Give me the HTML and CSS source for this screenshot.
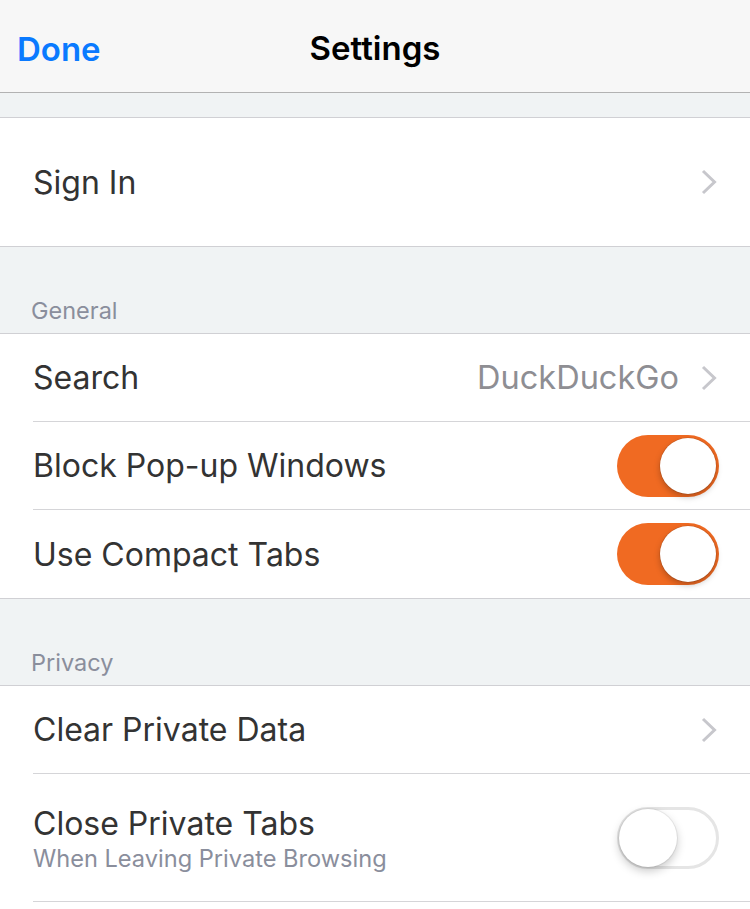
FILE: index.html
```html
<!DOCTYPE html>
<html>
<head>
<meta charset="utf-8">
<link rel="stylesheet" href="styles.css">
</head>
<body>
<div class="screen">
  <header class="navbar">
    <span class="nav-done">Done</span>
    <span class="nav-title">Settings</span>
  </header>
  <div class="gap gap-top"></div>
  <section class="group">
    <div class="row row-tall">
      <span class="label">Sign In</span>
      <span class="accessory"><svg class="chev" viewBox="0 0 16 26" width="16" height="26"><path d="M2 2 L13.5 13 L2 24" fill="none" stroke="#c7c7cc" stroke-width="3"/></svg></span>
    </div>
  </section>
  <div class="gap gap-header"><span class="section-title">General</span></div>
  <section class="group">
    <div class="row">
      <span class="label">Search</span>
      <span class="accessory"><span class="value">DuckDuckGo</span><svg class="chev" viewBox="0 0 16 26" width="16" height="26"><path d="M2 2 L13.5 13 L2 24" fill="none" stroke="#c7c7cc" stroke-width="3"/></svg></span>
    </div>
    <div class="row">
      <span class="label">Block Pop-up Windows</span>
      <span class="toggle on"><span class="knob"></span></span>
    </div>
    <div class="row">
      <span class="label">Use Compact Tabs</span>
      <span class="toggle on"><span class="knob"></span></span>
    </div>
  </section>
  <div class="gap gap-header"><span class="section-title">Privacy</span></div>
  <section class="group group-fill">
    <div class="row">
      <span class="label">Clear Private Data</span>
      <span class="accessory"><svg class="chev" viewBox="0 0 16 26" width="16" height="26"><path d="M2 2 L13.5 13 L2 24" fill="none" stroke="#c7c7cc" stroke-width="3"/></svg></span>
    </div>
    <div class="row row-sub">
      <span class="label-wrap">
        <span class="label">Close Private Tabs</span>
        <span class="sublabel">When Leaving Private Browsing</span>
      </span>
      <span class="toggle off"><span class="knob"></span></span>
    </div>
  </section>
</div>
</body>
</html>
```

FILE: styles.css
```css
html, body {
  margin: 0;
  padding: 0;
  background: #f0f3f4;
}
.screen {
  width: 750px;
  height: 909px;
  overflow: hidden;
  background: #f0f3f4;
  font-family: Inter, "Liberation Sans", sans-serif;
  display: flex;
  flex-direction: column;
}
.navbar {
  flex: none;
  height: 92px;
  background: #f7f7f7;
  border-bottom: 1px solid #b2b2b2;
  position: relative;
  display: flex;
  align-items: center;
  justify-content: center;
}
.nav-done {
  position: absolute;
  left: 17px;
  top: 29px;
  font-size: 33px;
  font-weight: 600;
  color: #0a7aff;
}
.nav-title {
  font-size: 33px;
  font-weight: 600;
  color: #000;
  margin-top: 3px;
}
.gap {
  flex: none;
  border-bottom: 1px solid #d0d0d4;
  box-sizing: border-box;
}
.gap-top {
  height: 25px;
}
.gap-header {
  height: 87px;
  display: flex;
  align-items: flex-end;
  padding: 0 0 8px 31px;
}
.section-title {
  font-size: 23.5px;
  color: #8a8e9c;
}
.group {
  flex: none;
  background: #fff;
  border-bottom: 1px solid #d0d0d4;
  padding-left: 33px;
}
.group-fill {
  flex: 1 0 auto;
  border-bottom: none;
}
.row {
  height: 88px;
  box-sizing: border-box;
  display: flex;
  align-items: center;
  justify-content: space-between;
  padding-right: 32px;
  border-bottom: 1px solid #d5d5d8;
}
.row:last-child {
  border-bottom: none;
}
.row-tall {
  height: 128px;
}
.group-fill .row:last-child {
  border-bottom: 1px solid #d5d5d8;
}
.row-sub {
  height: 128px;
}
.label {
  font-size: 32px;
  color: #333;
}
.label-wrap {
  display: flex;
  flex-direction: column;
  margin-top: 2px;
}
.sublabel {
  font-size: 23.6px;
  color: #8a8e9c;
  margin-top: 1px;
}
.accessory {
  display: flex;
  align-items: center;
}
.value {
  font-size: 32.5px;
  color: #8e8e93;
  margin-right: 22px;
}
.chev {
  display: block;
  margin-right: 1px;
}
.toggle {
  position: relative;
  width: 102px;
  height: 62px;
  border-radius: 31px;
  box-sizing: border-box;
  margin-right: -1px;
}
.toggle.on {
  background: #f06a22;
}
.toggle.off {
  background: #fff;
  border: 3px solid #e5e5e5;
  margin-top: 0;
}
.knob {
  position: absolute;
  width: 56px;
  height: 56px;
  border-radius: 50%;
  background: #fff;
  top: 3px;
}
.toggle.on .knob {
  right: 3px;
  box-shadow: 0 3px 6px rgba(0,0,0,0.25), 0 0 0 0.5px rgba(0,0,0,0.15);
}
.toggle.off .knob {
  left: -1px;
  top: -1px;
  width: 58px;
  height: 58px;
  box-shadow: 0 4px 10px rgba(0,0,0,0.22), 0 0 0 1px rgba(0,0,0,0.06);
}
```
